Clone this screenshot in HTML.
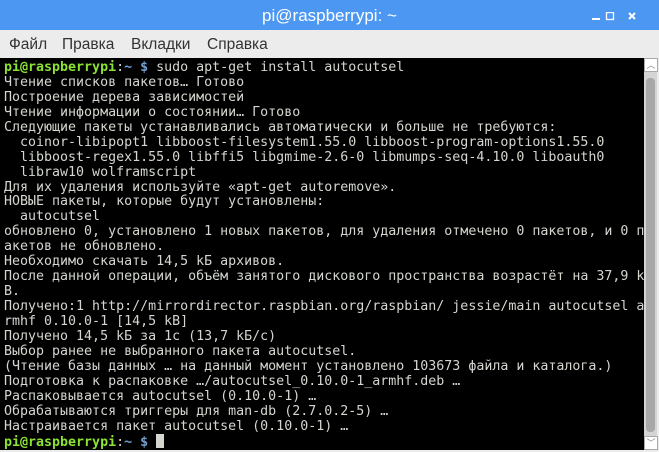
<!DOCTYPE html>
<html><head><meta charset="utf-8"><style>
body{margin:0;width:659px;height:452px;overflow:hidden;background:#ececec;font-family:"Liberation Sans","DejaVu Sans",sans-serif}
#title{position:absolute;left:0;top:0;width:659px;height:30px;background:#4c97f1;color:#fff;font-size:17px;text-align:center;line-height:32px}
#menu{position:absolute;top:30px;left:0;width:659px;height:28px;background:#ececec;font-size:15.5px;color:#333}
#menu span{position:absolute;top:6px}
#term{position:absolute;left:0;top:58px;width:644px;height:392px;background:#000;overflow:hidden}
pre{margin:0;padding:3px 0 0 4px;font-family:"DejaVu Sans Mono",monospace;font-size:13.3px;line-height:14.93px;color:#d3d7cf}
.g{color:#8ae234;font-weight:bold}.b{color:#729fcf;font-weight:bold}
.cur{display:inline-block;width:8px;height:14px;background:#d3d7cf;vertical-align:-2px}
#sb{position:absolute;left:644px;top:58px;width:13px;height:392px;background:#d4d4d4}
#thumb{position:absolute;left:2px;top:20px;width:9px;height:354px;background:#a8a8a8;border-radius:4px}
.btn{position:absolute;left:0;width:12px;height:12px;background:#fff;border:1px solid #aaa;color:#888;font-size:9px;text-align:center;line-height:12px}
</style></head><body>
<div id="title">pi@raspberrypi: ~
<svg style="position:absolute;left:590px;top:12px" width="60" height="10"><rect x="2" y="6" width="8" height="2" fill="#fff"/><rect x="16.5" y="0.5" width="7" height="7" fill="none" stroke="#fff" stroke-width="1.3"/><path d="M39 1l6 6M45 1l-6 6" stroke="#fff" stroke-width="2"/></svg></div>
<div id="menu"><span style="left:9px">Файл</span><span style="left:62px">Правка</span><span style="left:131px">Вкладки</span><span style="left:207px">Справка</span></div>
<div id="term"><pre><span class="g">pi@raspberrypi</span>:<span class="b">~ $</span> sudo apt-get install autocutsel
Чтение списков пакетов… Готово
Построение дерева зависимостей
Чтение информации о состоянии… Готово
Следующие пакеты устанавливались автоматически и больше не требуются:
  coinor-libipopt1 libboost-filesystem1.55.0 libboost-program-options1.55.0
  libboost-regex1.55.0 libffi5 libgmime-2.6-0 libmumps-seq-4.10.0 liboauth0
  libraw10 wolframscript
Для их удаления используйте «apt-get autoremove».
НОВЫЕ пакеты, которые будут установлены:
  autocutsel
обновлено 0, установлено 1 новых пакетов, для удаления отмечено 0 пакетов, и 0 п
акетов не обновлено.
Необходимо скачать 14,5 kБ архивов.
После данной операции, объём занятого дискового пространства возрастёт на 37,9 k
B.
Получено:1 http://mirrordirector.raspbian.org/raspbian/ jessie/main autocutsel a
rmhf 0.10.0-1 [14,5 kB]
Получено 14,5 kБ за 1с (13,7 kБ/c)
Выбор ранее не выбранного пакета autocutsel.
(Чтение базы данных … на данный момент установлено 103673 файла и каталога.)
Подготовка к распаковке …/autocutsel_0.10.0-1_armhf.deb …
Распаковывается autocutsel (0.10.0-1) …
Обрабатываются триггеры для man-db (2.7.0.2-5) …
Настраивается пакет autocutsel (0.10.0-1) …
<span class="g">pi@raspberrypi</span>:<span class="b">~ $</span> <span class="cur"></span></pre></div>
<div id="sb"><div class="btn" style="top:0">︿</div><div id="thumb"></div><div class="btn" style="top:378px">﹀</div></div>
</body></html>
